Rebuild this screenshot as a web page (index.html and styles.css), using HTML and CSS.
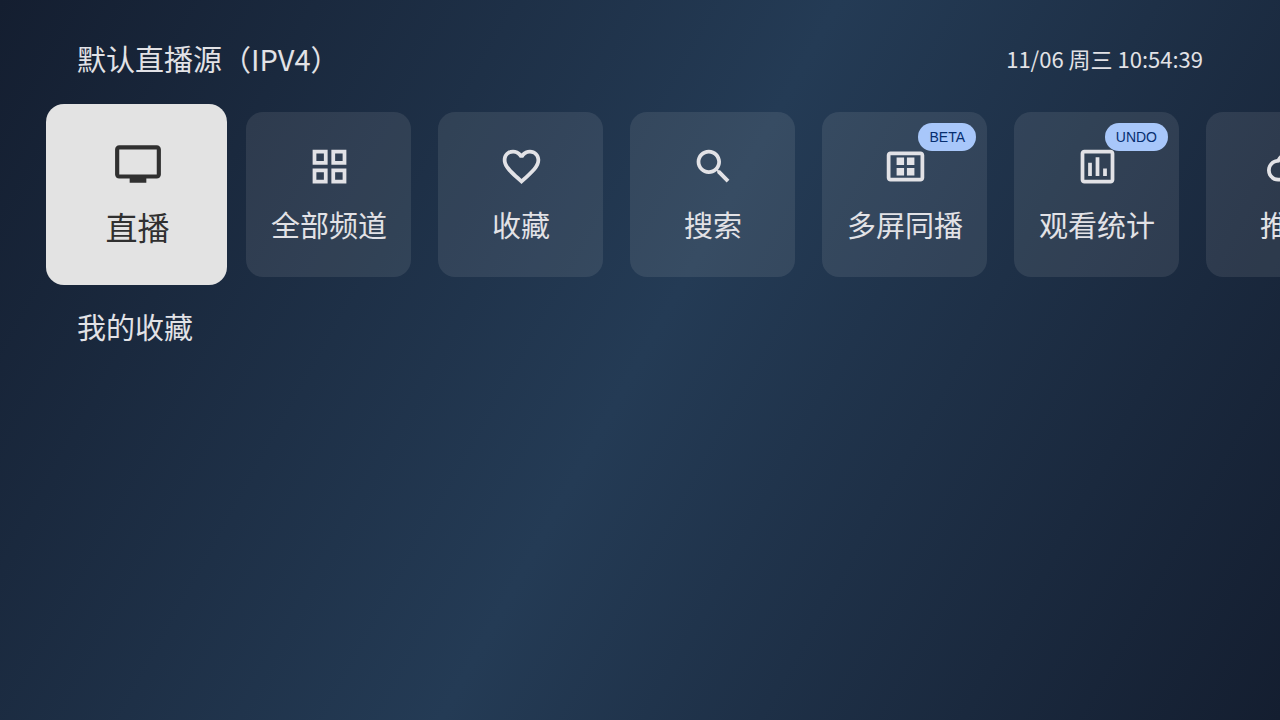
FILE: index.html
```html
<!DOCTYPE html>
<html lang="zh-CN">
  <head>
    <meta charset="UTF-8" />
    <meta name="viewport" content="width=device-width, initial-scale=1.0" />
    <title>直播</title>
    <link rel="stylesheet" href="styles.css">
  </head>
  <body>
    <header class="header">
      <h1 class="title">默认直播源（IPV4）</h1>
      <time class="clock">11/06 周三 10:54:39</time>
    </header>

    <main>
      <nav class="menu">
        <button type="button" class="card focused">
          <svg class="icon" viewBox="0 0 24 24"><path d="M21 3H3c-1.11 0-2 .89-2 2v12c0 1.1.89 2 2 2h5v2h8v-2h5c1.1 0 1.99-.9 1.99-2L23 5c0-1.11-.9-2-2-2zm0 14H3V5h18v12z" /></svg>
          <span class="label">直播</span>
        </button>
        <button type="button" class="card">
          <svg class="icon" viewBox="0 0 24 24"><path d="M3 3v8h8V3H3zm6 6H5V5h4v4zm-6 4v8h8v-8H3zm6 6H5v-4h4v4zm4-16v8h8V3h-8zm6 6h-4V5h4v4zm-6 4v8h8v-8h-8zm6 6h-4v-4h4v4z" /></svg>
          <span class="label">全部频道</span>
        </button>
        <button type="button" class="card">
          <svg class="icon" viewBox="0 0 24 24"><path d="M16.5 3c-1.74 0-3.41.81-4.5 2.09C10.91 3.81 9.24 3 7.5 3 4.42 3 2 5.42 2 8.5c0 3.78 3.4 6.86 8.55 11.54L12 21.35l1.45-1.32C18.6 15.36 22 12.28 22 8.5 22 5.42 19.58 3 16.5 3zm-4.4 15.55l-.1.1-.1-.1C7.14 14.24 4 11.39 4 8.5 4 6.5 5.5 5 7.5 5c1.54 0 3.04.99 3.57 2.36h1.87C13.46 5.99 14.96 5 16.5 5c2 0 3.5 1.5 3.5 3.5 0 2.89-3.14 5.74-7.9 10.05z" /></svg>
          <span class="label">收藏</span>
        </button>
        <button type="button" class="card">
          <svg class="icon" viewBox="0 0 24 24"><path d="M15.5 14h-.79l-.28-.27C15.41 12.59 16 11.11 16 9.5 16 5.91 13.09 3 9.5 3S3 5.91 3 9.5 5.91 16 9.5 16c1.61 0 3.09-.59 4.23-1.57l.27.28v.79l5 4.99L20.49 19l-4.99-5zm-6 0C7.01 14 5 11.99 5 9.5S7.01 5 9.5 5 14 7.01 14 9.5 11.99 14 9.5 14z" /></svg>
          <span class="label">搜索</span>
        </button>
        <button type="button" class="card">
          <svg class="icon" viewBox="0 0 24 24"><path d="M20 4H4c-1.1 0-2 .9-2 2v12c0 1.1.9 2 2 2h16c1.1 0 2-.9 2-2V6c0-1.1-.9-2-2-2zm0 14H4V6h16v12zM7.25 7.25h4v4h-4zm5.5 0h4v4h-4zm-5.5 5.5h4v4h-4zm5.5 0h4v4h-4z" /></svg>
          <span class="label">多屏同播</span>
          <span class="badge">BETA</span>
        </button>
        <button type="button" class="card">
          <svg class="icon" viewBox="0 0 24 24"><path d="M9 17H7v-7h2v7zm4 0h-2V7h2v10zm4 0h-2v-4h2v4zm2 2H5V5h14v14zm0-16H5c-1.1 0-2 .9-2 2v14c0 1.1.9 2 2 2h14c1.1 0 2-.9 2-2V5c0-1.1-.9-2-2-2z" /></svg>
          <span class="label">观看统计</span>
          <span class="badge">UNDO</span>
        </button>
        <button type="button" class="card">
          <svg class="icon" viewBox="0 0 24 24"><path d="M19.35 10.04C18.67 6.59 15.64 4 12 4 9.11 4 6.6 5.64 5.35 8.04 2.34 8.36 0 10.91 0 14c0 3.31 2.69 6 6 6h13c2.76 0 5-2.24 5-5 0-2.64-2.05-4.78-4.65-4.96zM19 18H6c-2.21 0-4-1.79-4-4 0-2.05 1.53-3.76 3.56-3.97l1.07-.11.5-.95C8.08 7.14 9.94 6 12 6c2.62 0 4.88 1.86 5.39 4.43l.3 1.5 1.53.11c1.56.1 2.78 1.41 2.78 2.96 0 1.65-1.35 3-3 3z" /></svg>
          <span class="label">推送</span>
        </button>
      </nav>

      <h2 class="title section-title">我的收藏</h2>
    </main>
  </body>
</html>
```

FILE: styles.css
```css
* {
  margin: 0;
  padding: 0;
  box-sizing: border-box;
}

body {
  min-height: 100vh;
  font-family: "Noto Sans CJK SC", sans-serif;
  color: #e2e2e6;
  background: linear-gradient(119deg, #141e30, #243b55, #141e30);
}

.header {
  display: flex;
  align-items: center;
  justify-content: space-between;
  padding: 38px 77px 26px;
}

.title {
  font-size: 29px;
  line-height: 40px;
  font-weight: 400;
}

.clock {
  font-size: 22px;
  line-height: 40px;
}

.menu {
  display: flex;
  gap: 27px;
  padding: 8px 54px;
  overflow-x: auto;
  scrollbar-width: none;
}

.card {
  position: relative;
  flex: none;
  display: flex;
  flex-direction: column;
  align-items: center;
  justify-content: center;
  gap: 15px;
  width: 165px;
  height: 165px;
  padding: 0 0 1px 1px;
  border: none;
  border-radius: 17px;
  background-color: rgba(226, 226, 226, 0.1);
  color: inherit;
  font-family: inherit;
  font-size: 29px;
  cursor: pointer;
}

.icon {
  width: 45px;
  height: 45px;
  fill: currentColor;
}

.label {
  line-height: 40px;
}

/* the focused card grows over the gap without moving its neighbours */
.focused {
  gap: 17px;
  width: 181px;
  height: 181px;
  margin: -8px;
  padding: 0 0 4px 2px;
  border-radius: 18px;
  background-color: #e3e3e3;
  color: #303030;
  font-size: 32px;
}

.focused .icon {
  width: 50px;
  height: 50px;
}

.badge {
  position: absolute;
  top: 11px;
  right: 11px;
  padding: 0 11px;
  border-radius: 14px;
  background-color: #a8c7fa;
  color: #062e6f;
  font-family: "Liberation Sans", sans-serif;
  font-size: 14px;
  line-height: 28px;
}

.section-title {
  padding: 21px 77px;
}
```
